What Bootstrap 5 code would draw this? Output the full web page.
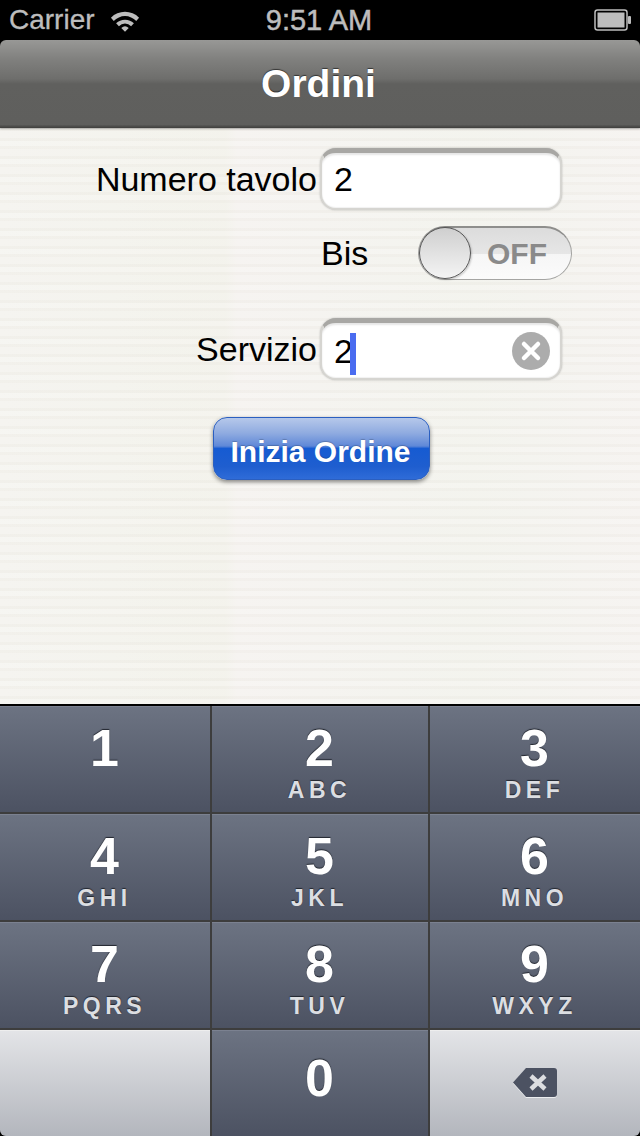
<!DOCTYPE html>
<html lang="it">
<head>
<meta charset="utf-8">
<title>Ordini</title>
<link href="https://cdn.jsdelivr.net/npm/bootstrap@5.3.0/dist/css/bootstrap.min.css" rel="stylesheet">
<style>
html,body{margin:0;height:1136px;width:640px;overflow:hidden;background:#000;font-family:"Liberation Sans",Arial,sans-serif;}
.phone{width:640px;height:1136px;}
.status{height:40px;background:#000;color:#bdbdbd;font-size:28px;line-height:40px;padding:0 9px;-webkit-text-stroke:.3px #bdbdbd;}
.status-time{width:100%;text-align:center;left:-1px;top:0;font-size:29px;-webkit-text-stroke:.5px #bdbdbd;}
.wifi{margin-left:15px;}
.batt{margin-right:-1px;}
.navtop{height:88px;border-radius:6px 6px 0 0;background:linear-gradient(#989896 0,#80807e 22%,#6e6e6c 44%,#60605e 50%,#5f5f5d 96%,#3e3e3c 100%);color:#fff;font-size:39px;font-weight:700;text-shadow:0 -1px 1px rgba(0,0,0,.55);box-shadow:0 1px 2px rgba(0,0,0,.3);position:relative;z-index:1;padding-right:3px;}
.paper{height:576px;background-color:#f4f3ef;background-image:repeating-linear-gradient(0deg,rgba(255,255,255,.22) 0 5px,rgba(226,223,216,.14) 5px 8px,rgba(255,255,255,.12) 8px 15px,rgba(228,224,218,.12) 15px 18px),linear-gradient(90deg,#f4f3ee,#f2f1ea 35%,#f5f2ef 37%,#f2f2ec 74%,#f5f2ef);padding-top:20px;}
.frow{height:62px;}
.flabel{width:317px;text-align:right;font-size:34px;color:#000;line-height:62px;}
.tinput{width:242px;height:62px;margin-left:3px;border-radius:16px;background:#fff;border:2px solid #d6d5d1;border-top:5px solid #a8a7a4;box-shadow:inset 0 2px 2px rgba(0,0,0,.1),inset 0 -1px 1px rgba(0,0,0,.06),0 0 2px rgba(0,0,0,.25);font-size:34px;color:#000;padding:0 0 0 12px;line-height:52px;}
.caret-bar{display:inline-block;width:6px;height:42px;background:#4a6cf0;vertical-align:middle;margin-left:-3px;margin-top:1px;}
.clearx{width:38px;height:38px;margin-right:10px;}
.srow{height:54px;margin-top:16px;margin-bottom:38px;}
.slabel{margin-left:321px;width:97px;font-size:34px;line-height:54px;color:#000;}
.switchx{width:154px;height:54px;border-radius:27px;border:1px solid #a5a5a3;border-top:2px solid #8e8e8c;background:linear-gradient(#dcdcdc 0,#e6e6e6 50%,#f6f6f6 52%,#fbfbfb 100%);position:relative;}
.knob{position:absolute;left:0;top:-1px;width:52px;height:52px;border-radius:50%;background:linear-gradient(#cfcfcf,#f4f4f4);border:1px solid #555;box-shadow:1px 1px 2px rgba(0,0,0,.2);}
.offt{position:absolute;left:66px;top:0;width:64px;text-align:center;font-size:30px;font-weight:700;line-height:52px;color:#8a8a8a;}
.startbtn{display:block;width:217px;height:63px;margin:37px 0 0 213px;padding:0 2px 0 0;border:1px solid #2b5fc0;border-radius:14px;color:#fff;font-size:30px;font-weight:700;line-height:68px;background:linear-gradient(#b6c8ea 0,#8fabe0 25%,#5f88d8 46%,#165bd2 50%,#1f5ecf 80%,#2f6cd8 100%);box-shadow:0 2px 4px rgba(0,0,0,.45);text-shadow:0 -1px 1px rgba(0,0,0,.2);}
.keypad{height:432px;background:#3d3d3d;border-top:2px solid #000;border-radius:0 0 6px 6px;overflow:hidden;display:grid;grid-template-columns:210px 216px 210px;grid-auto-rows:106px;gap:2px;}
.keycap{background:linear-gradient(#6c7382,#4c5262);border-top:1px solid #7b8190;color:#fff;display:flex;flex-direction:column;align-items:center;}
.keynum{font-size:52px;font-weight:700;line-height:52px;margin-top:15px;margin-right:1px;text-shadow:0 -1px 1px #22262f;}
.keynum-low{margin-top:21px;}
.keysub{font-size:23px;font-weight:700;letter-spacing:4.500px;line-height:26px;color:#dcdee2;margin-top:3px;margin-right:1px;text-shadow:0 -1px 1px #22262f;}
.keylite{background:linear-gradient(#e3e4e7,#b3b6bd);border-top:1px solid #eee;display:flex;align-items:center;justify-content:center;}
.bksp{margin-top:-1px;margin-left:-1px;filter:drop-shadow(0 1px 0 #eceef0);}
</style>
</head>
<body>
<div class="phone d-flex flex-column">
  <div class="status d-flex align-items-center position-relative">
    <span>Carrier</span>
    <svg class="wifi" width="30" height="23" viewBox="0 0 32 24"><path d="M1 9 A21 21 0 0 1 31 9 L28 12.500 A16.500 16.500 0 0 0 4 12.500Z M6.500 15 A13.500 13.500 0 0 1 25.500 15 L22.500 18 A9 9 0 0 0 9.500 18Z M12 20 A6 6 0 0 1 20 20 L16 24Z" fill="#bdbdbd"/></svg>
    <span class="status-time position-absolute">9:51 AM</span>
    <svg class="batt ms-auto" width="38" height="22" viewBox="0 0 38 22"><rect x="1" y="1" width="32" height="20" rx="2.500" fill="none" stroke="#bdbdbd" stroke-width="1.500"/><rect x="3.500" y="3.500" width="27" height="15" fill="#bdbdbd"/><rect x="34" y="7" width="3" height="8" rx="1" fill="#bdbdbd"/></svg>
  </div>
  <div class="navtop d-flex align-items-center justify-content-center">Ordini</div>
  <div class="paper">
    <div class="frow d-flex">
      <div class="flabel">Numero tavolo</div>
      <div class="tinput">2</div>
    </div>
    <div class="srow d-flex">
      <div class="slabel">Bis</div>
      <div class="switchx"><span class="knob"></span><span class="offt">OFF</span></div>
    </div>
    <div class="frow d-flex">
      <div class="flabel">Servizio</div>
      <div class="tinput d-flex align-items-center justify-content-between">
        <span>2<span class="caret-bar"></span></span>
        <svg class="clearx" viewBox="0 0 38 38"><circle cx="19" cy="19" r="19" fill="#acacac"/><path d="M12 12 L26 26 M26 12 L12 26" stroke="#fff" stroke-width="4.500" stroke-linecap="round"/></svg>
      </div>
    </div>
    <button type="button" class="btn startbtn">Inizia Ordine</button>
  </div>
  <div class="keypad">
    <div class="keycap"><span class="keynum">1</span></div>
    <div class="keycap"><span class="keynum">2</span><span class="keysub">ABC</span></div>
    <div class="keycap"><span class="keynum">3</span><span class="keysub">DEF</span></div>
    <div class="keycap"><span class="keynum">4</span><span class="keysub">GHI</span></div>
    <div class="keycap"><span class="keynum">5</span><span class="keysub">JKL</span></div>
    <div class="keycap"><span class="keynum">6</span><span class="keysub">MNO</span></div>
    <div class="keycap"><span class="keynum">7</span><span class="keysub">PQRS</span></div>
    <div class="keycap"><span class="keynum">8</span><span class="keysub">TUV</span></div>
    <div class="keycap"><span class="keynum">9</span><span class="keysub">WXYZ</span></div>
    <div class="keylite"></div>
    <div class="keycap"><span class="keynum keynum-low">0</span></div>
    <div class="keylite">
      <svg class="bksp" width="46" height="32" viewBox="0 0 46 32"><path d="M14 1 H42 Q45 1 45 4 V27 Q45 30 42 30 H14 L1 15.500Z" fill="#4c5262"/><path d="M19 9 L33 22 M33 9 L19 22" stroke="#dcdde0" stroke-width="4.500"/></svg>
    </div>
  </div>
</div>
<script src="https://cdn.jsdelivr.net/npm/bootstrap@5.3.0/dist/js/bootstrap.bundle.min.js"></script>
</body>
</html>
